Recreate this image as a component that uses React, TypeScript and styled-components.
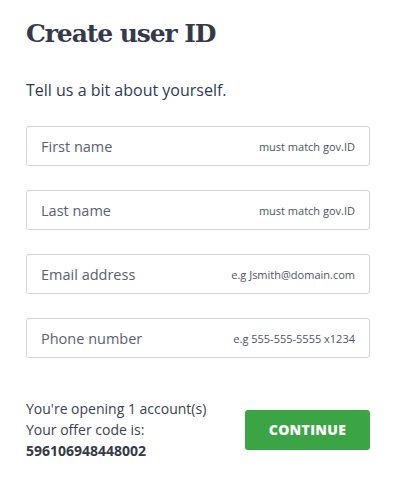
import styled, { createGlobalStyle } from "styled-components";

const GlobalStyle = createGlobalStyle`
  body {
    margin: 0;
    background: #fff;
    font-family: "Open Sans", "Liberation Sans", sans-serif;
  }
`;

const fields = [
  { label: "First name", hint: "must match gov.ID" },
  { label: "Last name", hint: "must match gov.ID" },
  { label: "Email address", hint: "e.g Jsmith@domain.com" },
  { label: "Phone number", hint: "e.g 555-555-5555 x1234" },
];

const App = () => {
  return (
    <>
      <GlobalStyle />
      <Page>
        <Title>Create user ID</Title>
        <Intro>Tell us a bit about yourself.</Intro>
        <Fields>
          {fields.map((f) => (
            <Field key={f.label}>
              <Label>{f.label}</Label>
              <Hint>{f.hint}</Hint>
            </Field>
          ))}
        </Fields>
        <Footer>
          <Summary>
            <div>You're opening 1 account(s)</div>
            <div>Your offer code is:</div>
            <Code>596106948448002</Code>
          </Summary>
          <ContinueButton>CONTINUE</ContinueButton>
        </Footer>
      </Page>
    </>
  );
};

export default App;

const Page = styled.main`
  display: flex;
  flex-direction: column;
  width: 344px;
  padding: 15px 0 0 26px;
`;

const Title = styled.h1`
  margin: 0;
  font-family: "DejaVu Serif", "Liberation Serif", serif;
  font-weight: bold;
  font-size: 25px;
  line-height: 38px;
  color: #343a4b;
  letter-spacing: -1.1px;
`;

const Intro = styled.p`
  margin: 26px 0 0;
  font-size: 16px;
  line-height: 22px;
  color: #2f3a52;
`;

const Fields = styled.div`
  display: flex;
  flex-direction: column;
  gap: 24px;
  margin-top: 25px;
`;

const Field = styled.div`
  display: flex;
  align-items: center;
  justify-content: space-between;
  height: 40px;
  box-sizing: border-box;
  padding: 0 14px;
  border: 1px solid #ccd3de;
  border-radius: 3px;
`;

const Label = styled.span`
  font-size: 14.5px;
  color: #596172;
`;

const Hint = styled.span`
  font-size: 11px;
  color: #4c5466;
`;

const Footer = styled.div`
  display: flex;
  align-items: center;
  justify-content: space-between;
  margin-top: 40px;
`;

const Summary = styled.div`
  font-size: 14px;
  line-height: 21px;
  color: #3a4150;
`;

const Code = styled.div`
  font-weight: bold;
  color: #333a47;
`;

const ContinueButton = styled.button`
  width: 125px;
  height: 40px;
  border: none;
  border-radius: 3px;
  background: #3ba545;
  color: #fff;
  font-family: "Open Sans", "Liberation Sans", sans-serif;
  font-weight: 800;
  font-size: 14px;
  letter-spacing: 0.3px;
`;
